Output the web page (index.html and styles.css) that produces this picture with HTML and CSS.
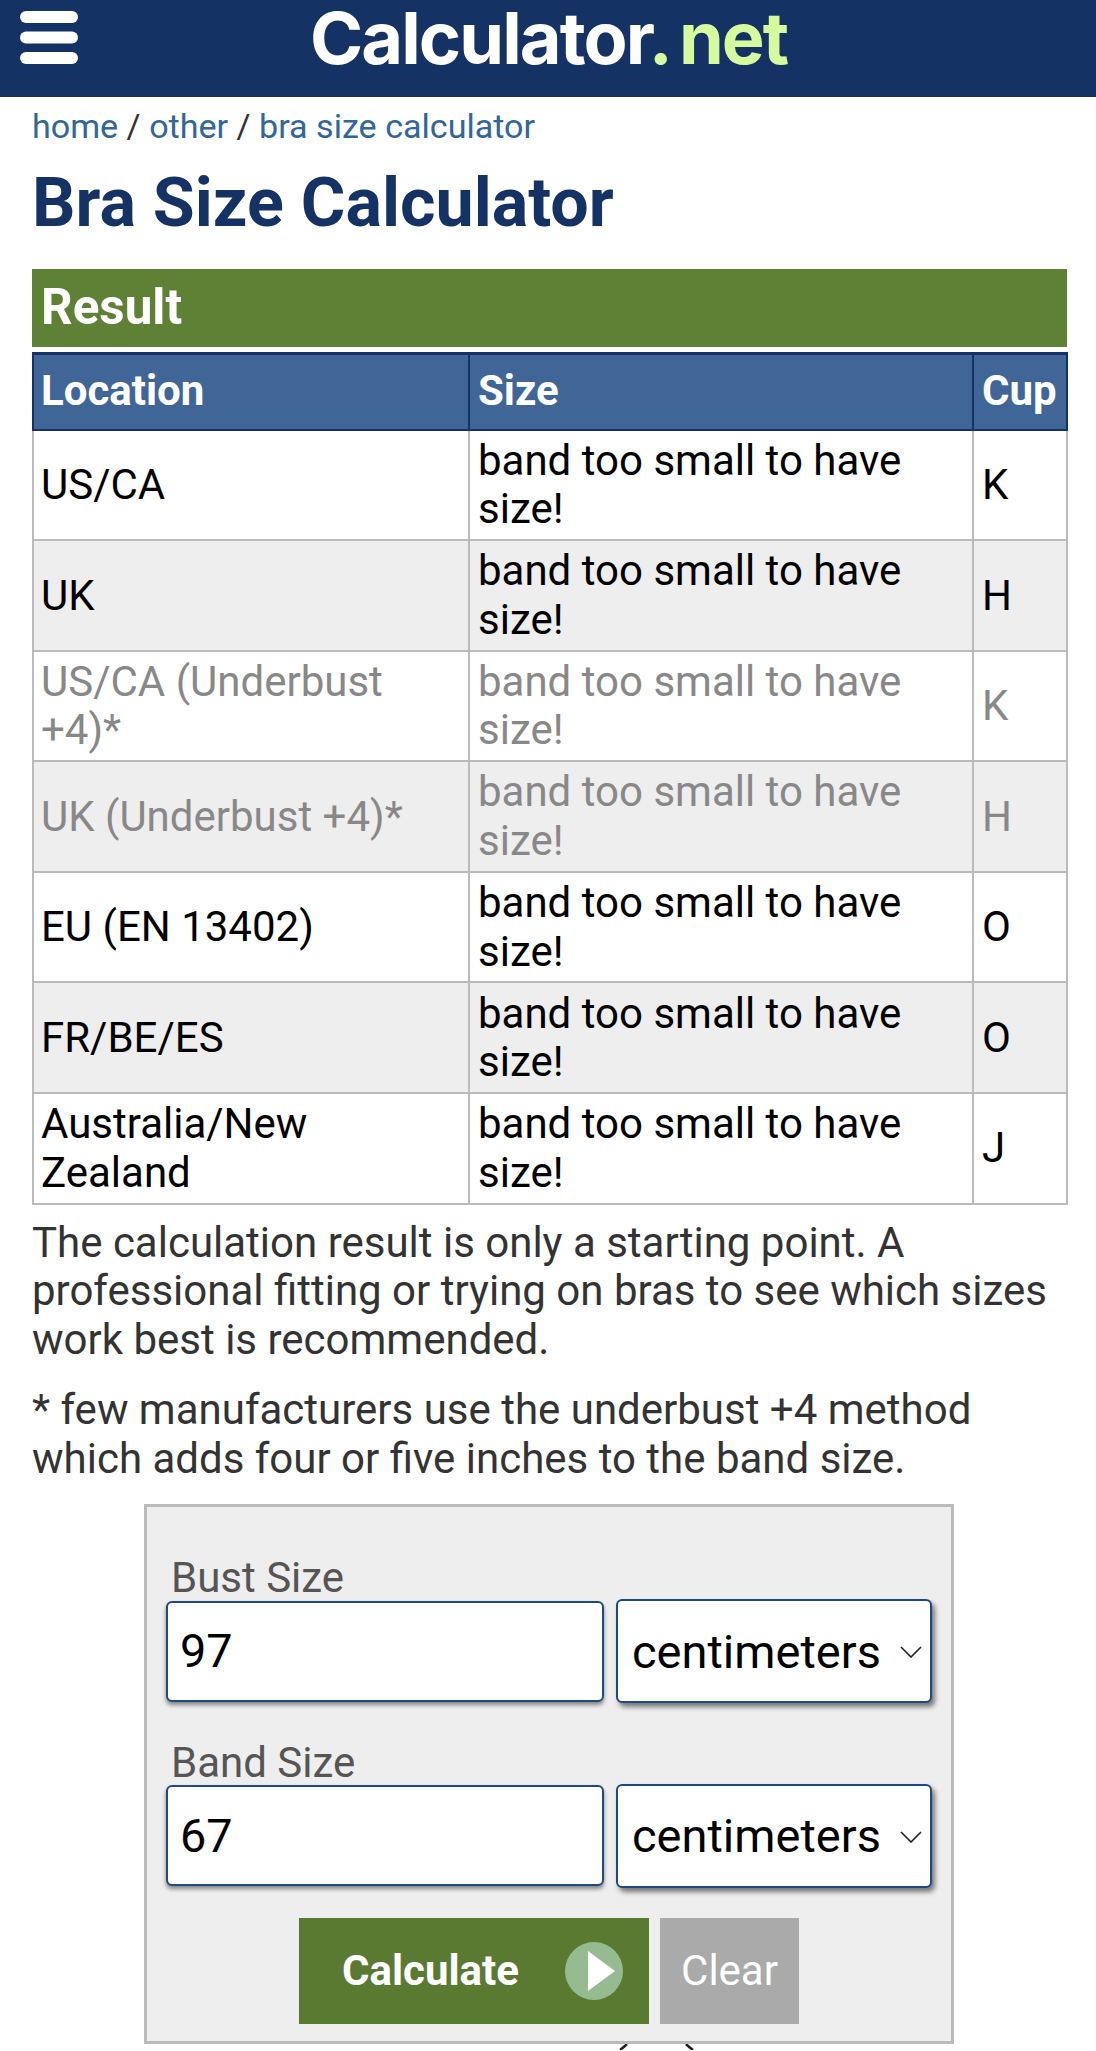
FILE: index.html
```html
<!DOCTYPE html>
<html lang="en">
<head>
<meta charset="utf-8">
<title>Bra Size Calculator</title>
<link rel="stylesheet" href="styles.css">
</head>
<body>
<header class="topbar">
  <svg class="burger" viewBox="0 0 58 54" aria-hidden="true"><rect x="0" y="0" width="58" height="12" rx="6"/><rect x="0" y="20.500" width="58" height="12" rx="6"/><rect x="0" y="41" width="58" height="12" rx="6"/></svg>
  <div class="logo">Calculator<span class="logo-net"><span class="logo-dot">.</span>net</span></div>
</header>
<main class="page">
  <nav class="crumbs"><a href="#">home</a> / <a href="#">other</a> / <a href="#">bra size calculator</a></nav>
  <h1>Bra Size Calculator</h1>
  <h2 class="result">Result</h2>
  <table class="sizes">
    <colgroup><col class="c1"><col class="c2"><col class="c3"></colgroup>
    <thead><tr><th>Location</th><th>Size</th><th>Cup</th></tr></thead>
    <tbody>
      <tr><td>US/CA</td><td>band too small to have size!</td><td>K</td></tr>
      <tr><td>UK</td><td>band too small to have size!</td><td>H</td></tr>
      <tr class="dim"><td>US/CA (Underbust +4)*</td><td>band too small to have size!</td><td>K</td></tr>
      <tr class="dim"><td>UK (Underbust +4)*</td><td>band too small to have size!</td><td>H</td></tr>
      <tr><td>EU (EN 13402)</td><td>band too small to have size!</td><td>O</td></tr>
      <tr><td>FR/BE/ES</td><td>band too small to have size!</td><td>O</td></tr>
      <tr><td>Australia/New Zealand</td><td>band too small to have size!</td><td>J</td></tr>
    </tbody>
  </table>
  <p class="note">The calculation result is only a starting point. A professional fitting or trying on bras to see which sizes work best is recommended.</p>
  <p class="note note-2">* few manufacturers use the underbust +4 method which adds four or five inches to the band size.</p>
  <form class="calc">
    <label class="field-label" for="bust">Bust Size</label>
    <div class="row">
      <input id="bust" class="num" type="text" value="97">
      <div class="sel-wrap">
        <select class="unit"><option>centimeters</option></select>
        <svg class="chev" viewBox="0 0 22 12" aria-hidden="true"><path d="M1 1l10 10L21 1"/></svg>
      </div>
    </div>
    <label class="field-label label-2" for="band">Band Size</label>
    <div class="row">
      <input id="band" class="num" type="text" value="67">
      <div class="sel-wrap">
        <select class="unit"><option>centimeters</option></select>
        <svg class="chev" viewBox="0 0 22 12" aria-hidden="true"><path d="M1 1l10 10L21 1"/></svg>
      </div>
    </div>
    <div class="actions">
      <button type="button" class="btn-calc">Calculate
        <svg class="play" viewBox="0 0 58 58" aria-hidden="true"><circle cx="29" cy="29" r="29"/><path d="M23 9l27 20-27 20z"/></svg>
      </button>
      <button type="button" class="btn-clear">Clear</button>
    </div>
  </form>
  <svg class="peek" viewBox="0 0 80 6" aria-hidden="true"><path d="M8 0Q5 3 1 6M67 0Q70 3 74 6"/></svg>
</main>
</body>
</html>
```
FILE: styles.css
```css
* { box-sizing: border-box; }
html, body { margin: 0; background: #fff; }
body { height: 2051px; overflow: hidden; font-family: Roboto, "Liberation Sans", sans-serif; color: #333; font-size: 42px; line-height: 48.750px; }

.topbar { height: 97px; background: #143264; display: flex; align-items: flex-start; }
.burger { flex: none; width: 58px; height: 54px; margin: 11px 0 0 20px; fill: #fff; }
.logo { margin-left: 232px; font-family: Inter, sans-serif; font-weight: 700; font-size: 72px; line-height: 75px; height: 75px; color: #fff; letter-spacing: -1.900px; white-space: nowrap; }
.logo-net { color: #d6fb9f; }
.logo-dot { margin-right: 8px; }

.page { padding: 0 29px 0 32px; }
.crumbs { color: #333; height: 59px; padding-top: 9px; font-size: 34.100px; line-height: 40px; }
.crumbs a { color: #336699; text-decoration: none; }
h1 { margin: 0; color: #143264; font-size: 68.200px; line-height: 76px; font-weight: 700; height: 113px; padding-top: 9px; }
.result { margin: 0; height: 78px; background: #5e8136; color: #fff; font-size: 49.400px; line-height: 76px; padding-left: 9px; font-weight: 700; }

.sizes { width: 1034px; margin-top: 5px; border-collapse: collapse; table-layout: fixed; color: #000; }
.c1 { width: 436px; }
.c2 { width: 504px; }
.c3 { width: 94px; }
.sizes th { height: 76px; background: #406698; color: #fff; text-align: left; font-weight: 700; padding: 0 8px; border: 2px solid #143264; border-top-width: 3px; }
.sizes th:first-child, .sizes td:first-child { padding-left: 7px; }
.sizes td { height: 110.600px; padding: 1px 8px 0; border: 2px solid #bbb; vertical-align: middle; }
.sizes tbody tr:nth-child(even) { background: #eee; }
.sizes .dim td { color: #888; }

.note { margin: 14px 0 0; }
.note-2 { margin-top: 21px; }

.calc { width: 810px; height: 540px; margin: 21px 0 0 112px; background: #eee; border: 3px solid #bbb; padding: 0 19px; }
.field-label { display: block; color: #555; padding-left: 5px; }
.calc > .field-label:first-child { padding-top: 47px; }
.label-2 { margin-top: 36px; }
.row { display: flex; align-items: center; gap: 12px; margin-top: -4px; }
.num { width: 438px; height: 101px; border: 2.600px solid #1f4a80; border-radius: 6px; background: #fff; box-shadow: 0 3px 4px rgba(0,0,0,.45); font: 46.800px Roboto, sans-serif; color: #000; padding: 0 12px; outline: 0; }
.sel-wrap { position: relative; width: 316px; height: 104px; }
.unit { appearance: none; -webkit-appearance: none; width: 100%; height: 100%; border: 2.600px solid #1f4a80; border-radius: 6px; background: #fff; box-shadow: 3px 4px 5px rgba(0,0,0,.5); font: 47px Roboto, sans-serif; color: #000; padding: 0 0 0 14px; outline: 0; }
.chev { position: absolute; right: 10px; top: 47px; width: 22px; height: 12px; fill: none; stroke: #222; stroke-width: 1.600; }
.actions { display: flex; justify-content: flex-start; gap: 11px; margin: 30px 0 0 133px; }
.btn-calc, .btn-clear { height: 106px; border: 0; color: #fff; font-family: Roboto, sans-serif; font-size: 42px; padding: 0; display: flex; align-items: center; }
.btn-calc { width: 350px; background: #5a7a32; font-weight: 700; padding-left: 43px; gap: 46px; }
.btn-clear { width: 139px; background: #aaa; justify-content: center; font-weight: 400; }
.play { width: 58px; height: 58px; }
.play circle { fill: #97bb91; }
.play path { fill: #fff; }
.peek { display: block; width: 80px; height: 6px; margin: 0 0 0 587px; fill: none; stroke: #222; stroke-width: 2.500; }
```
